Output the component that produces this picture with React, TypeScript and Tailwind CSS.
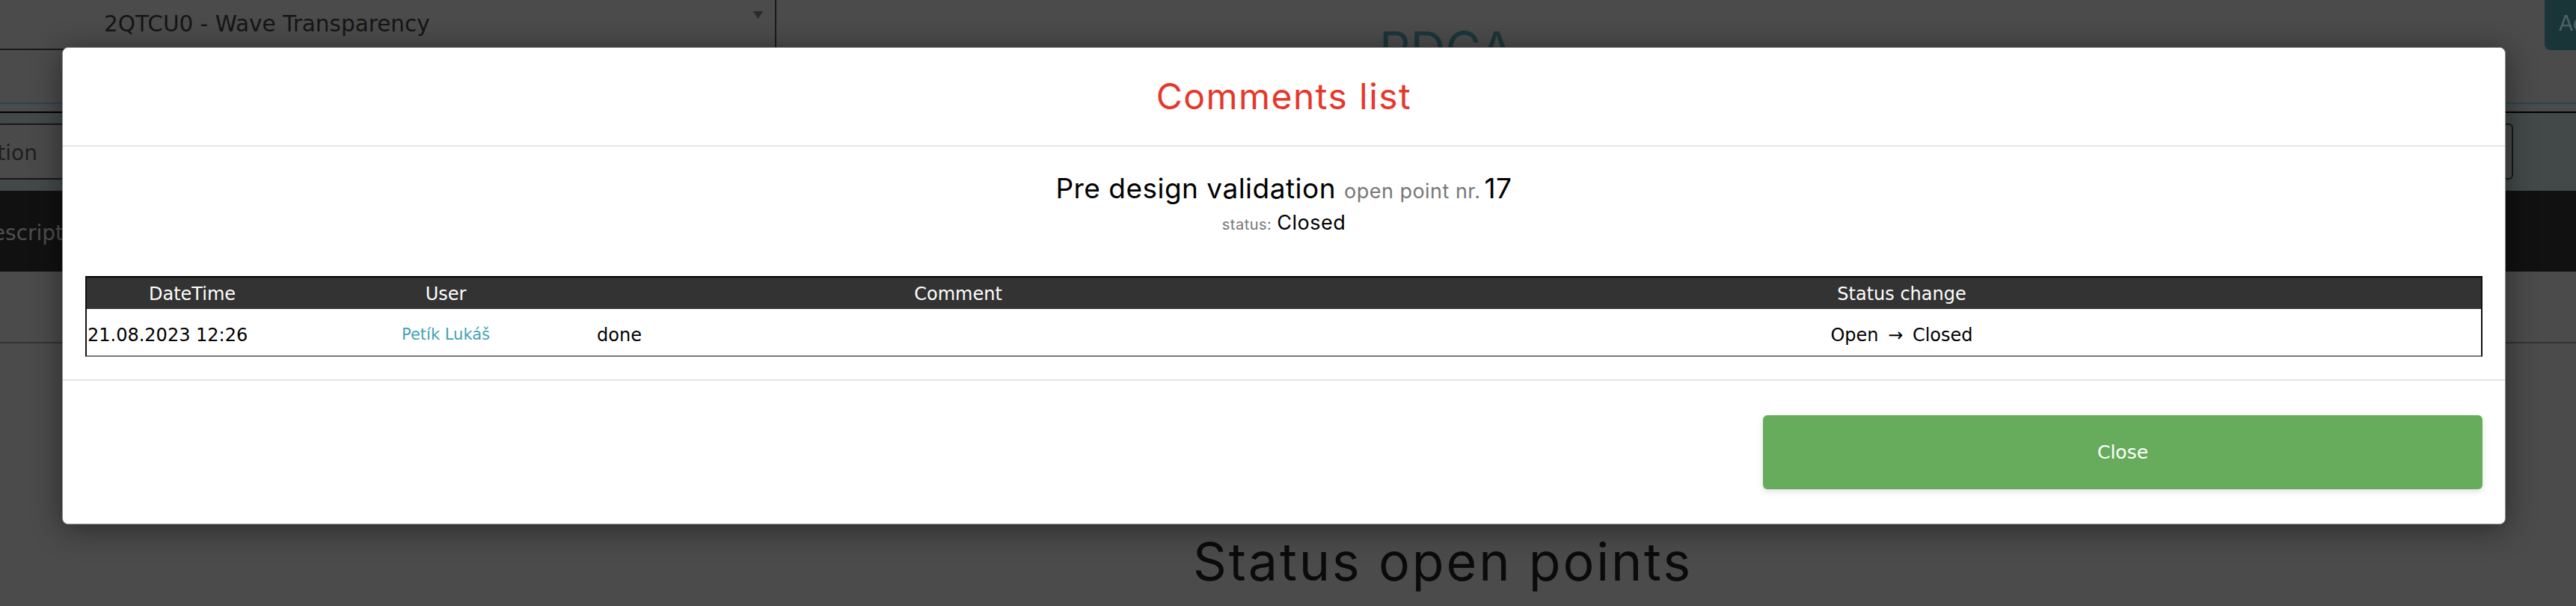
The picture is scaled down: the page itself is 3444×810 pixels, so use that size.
import React from "react";

const mont = "font-['Inter',sans-serif] tracking-[0.03em]";
const verd = "font-['DejaVu_Sans',sans-serif]";

export default function App() {
  return (
    <div className="relative h-[810px] w-[3444px] overflow-hidden bg-[#4b4b4b]">
      {/* Page behind the dimmed overlay */}
      <div className="flex flex-col">
        {/* top bar */}
        <div className="flex h-[67px] items-start">
          <div className="relative flex h-[67px] w-[1038px] shrink-0 items-center border-b-2 border-r-2 border-[#1a1a1a] pl-[139px]">
            <span className={`${verd} text-[29.5px] leading-none text-[#151515]`}>
              2QTCU0 - Wave Transparency
            </span>
            <svg className="absolute right-[16px] top-[15px]" width="13" height="10" viewBox="0 0 13 10">
              <polygon points="0,0 13,0 6.5,10" fill="#2a2a2a" />
            </svg>
          </div>
          <div className="flex flex-1 pl-[806px] pt-[33px]">
            <span className="font-['Inter',sans-serif] text-[65px] leading-none text-[#1b363a]">PDCA</span>
          </div>
          <div className="h-[67px] w-[42px] shrink-0 overflow-hidden rounded-bl-[8px] bg-[#1a3538] pl-[19px] pt-[18px]">
            <span className={`${verd} whitespace-nowrap text-[28px] leading-none text-[#4c6365]`}>Add</span>
          </div>
        </div>
        <div className="h-[70px]" />
        <div className="h-[2px] bg-[#26474b]" />
        <div className="h-[10px]" />
        {/* toolbar */}
        <div className="flex h-[106px] border-t-2 border-black bg-[#434949] pb-[15px] pr-[84px] pt-[14px]">
          <div className="-ml-[4px] flex flex-1 items-center rounded-[6px] border-2 border-[#181818] bg-[#4a4a4a] pt-[4px]">
            <div className="flex w-[52px] justify-end overflow-hidden">
              <span className={`${verd} whitespace-nowrap text-[28px] text-[#1e1e1e]`}>Description</span>
            </div>
          </div>
        </div>
        {/* dark table header */}
        <div className="flex h-[108px] items-center overflow-hidden bg-[#111] pt-[6px]">
          <span className={`${verd} -ml-[112px] whitespace-nowrap text-[28px] text-[#4f4f4f]`}>Short description</span>
        </div>
        <div className="h-[94px]" />
        <div className="h-[2px] bg-[#333]" />
        <div className="flex justify-center pl-[414px] pt-[257px]">
          <span className="font-['Inter',sans-serif] text-[70px] leading-none tracking-[0.04em] text-[#0b0b0b]">
            Status open points
          </span>
        </div>
      </div>

      {/* Modal layer */}
      <div className="absolute inset-0 pl-[83px] pr-[94px] pt-[63px]">
        <div className="flex flex-col rounded-[8px] border border-[#8c8c8c] bg-white shadow-[0_6px_40px_rgba(0,0,0,0.45)]">
          <div className="flex h-[132px] items-center justify-center border-b-2 border-[#e5e5e5]">
            <h2 className={`${mont} text-[48px] font-normal leading-none text-[#e7372b]`}>Comments list</h2>
          </div>
          <div className="flex flex-col px-[30px] pb-[30px] pt-[37px]">
            <div className={`${mont} flex h-[37px] items-baseline justify-center leading-none`}>
              <span className="text-[37px] text-black">Pre design validation</span>
              <span className="ml-[11px] text-[27px] text-[#777]">open point nr.</span>
              <span className="ml-[5px] text-[37px] text-black">17</span>
            </div>
            <div className={`${mont} mt-[14px] flex h-[27px] items-baseline justify-center leading-none`}>
              <span className="text-[20px] text-[#777]">status:</span>
              <span className="ml-[7px] text-[27px] text-black">Closed</span>
            </div>
            <div className="mt-[58px] border-x-2 border-b-2 border-t-2 border-x-[#111] border-b-[#777] border-t-black">
              <table className={`${verd} w-full table-fixed border-collapse text-[24px]`}>
                <colgroup>
                  <col className="w-[282px]" />
                  <col className="w-[396px]" />
                  <col className="w-[974px]" />
                  <col />
                </colgroup>
                <thead>
                  <tr className="h-[42px] bg-[#333] text-white">
                    <th className="pt-[2px] text-center font-normal">DateTime</th>
                    <th className="pt-[2px] text-center font-normal">User</th>
                    <th className="pt-[2px] text-center font-normal">Comment</th>
                    <th className="pt-[2px] text-center font-normal">Status change</th>
                  </tr>
                </thead>
                <tbody>
                  <tr className="h-[62px] text-black">
                    <td className="whitespace-nowrap pl-[1px] pt-[8px] text-left">21.08.2023 12:26</td>
                    <td className="pt-[8px] text-center text-[21px] text-[#45a1b2]">Petík Lukáš</td>
                    <td className="pl-[4px] pt-[8px] text-left">done</td>
                    <td className="pt-[8px] text-center">
                      Open <span className="mx-[5px]">→</span> Closed
                    </td>
                  </tr>
                </tbody>
              </table>
            </div>
          </div>
          <div className="flex justify-end border-t-2 border-[#e5e5e5] px-[30px] py-[46px]">
            <button className={`${verd} flex h-[99px] w-[962px] items-center justify-center rounded-[6px] bg-[#67ac5c] text-[25px] text-white shadow-[0_3px_8px_rgba(0,0,0,0.12)]`}>
              Close
            </button>
          </div>
        </div>
      </div>
    </div>
  );
}
